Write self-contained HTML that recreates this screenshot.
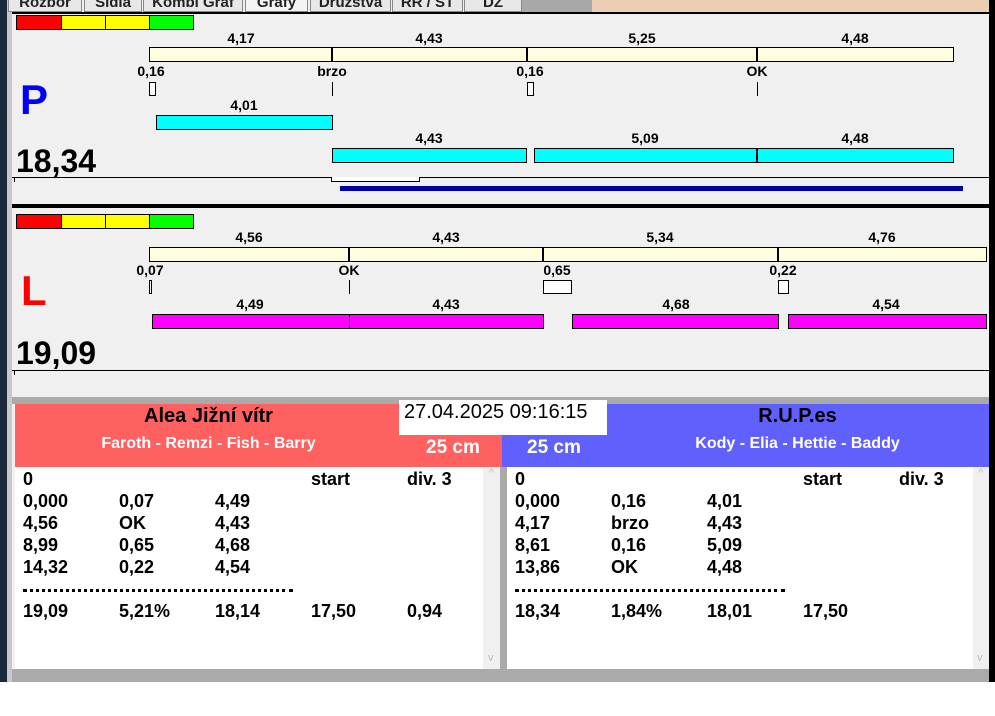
<!DOCTYPE html>
<html><head><meta charset="utf-8"><style>
*{margin:0;padding:0;box-sizing:border-box}
body{width:995px;height:716px;background:#fff;position:relative;overflow:hidden;font-family:"Liberation Sans",Arial,sans-serif}
div{position:absolute}
.l{font-size:14px;font-weight:bold;transform:translateX(-50%);white-space:nowrap;line-height:14px}
.y{background:#ffffe0;border:1px solid #000;height:15px}
.c{background:#00ffff;border:1px solid #000;height:15px}
.m{background:#ff00ff;border:1px solid #000;height:15px}
.v{border-left:2px solid #000}
.bx{background:#fff;border:1px solid #000;height:14px}
.tk{border-left:1px solid #000;height:14px}
.t{font-size:18px;font-weight:bold;line-height:22px;white-space:nowrap}
.tab{top:0;height:12px;background:#e8e8e8;border:1px solid #888;border-top:none;font-size:15px;overflow:hidden;line-height:5px;text-align:center;font-weight:bold;color:#222}
</style></head><body>
<div style="left:0;top:0;width:995px;height:682px;background:#f0f0f0"></div>
<div style="left:0;top:0;width:7px;height:682px;background:#1a2a3a"></div>
<div style="left:7px;top:0;width:5px;height:682px;background:#c8c8c8"></div>
<div style="left:989px;top:0;width:6px;height:682px;background:#000"></div>
<div style="left:522px;top:0;width:70px;height:12px;background:#a8a8a8"></div>
<div style="left:592px;top:0;width:397px;height:12px;background:#ebcfb4"></div>
<div class="tab" style="left:8px;width:74px">Rozbor</div>
<div class="tab" style="left:84px;width:58px">Sidla</div>
<div class="tab" style="left:143px;width:100px">Kombi Graf</div>
<div class="tab" style="left:245px;width:63px;background:#f4f4f4">Grafy</div>
<div class="tab" style="left:310px;width:81px">Družstva</div>
<div class="tab" style="left:392px;width:71px">RR / ST</div>
<div class="tab" style="left:464px;width:58px">DZ</div>
<div style="left:12px;top:12px;width:977px;height:2px;background:#000"></div>

<!-- P panel -->
<div style="left:16px;top:15px;width:46px;height:15px;background:#f00;border:1px solid #000"></div>
<div style="left:61px;top:15px;width:45px;height:15px;background:#ff0;border:1px solid #000"></div>
<div style="left:105px;top:15px;width:45px;height:15px;background:#ff0;border:1px solid #000"></div>
<div style="left:149px;top:15px;width:45px;height:15px;background:#0f0;border:1px solid #000"></div>
<div class="l" style="left:241px;top:31px">4,17</div><div class="l" style="left:429px;top:31px">4,43</div><div class="l" style="left:642px;top:31px">5,25</div><div class="l" style="left:855px;top:31px">4,48</div>
<div class="y" style="left:149px;top:47px;width:805px"></div>
<div class="v" style="left:331px;top:47px;height:15px"></div><div class="v" style="left:526px;top:47px;height:15px"></div><div class="v" style="left:756px;top:47px;height:15px"></div>
<div class="l" style="left:151px;top:64px">0,16</div><div class="l" style="left:332px;top:64px">brzo</div><div class="l" style="left:530px;top:64px">0,16</div><div class="l" style="left:757px;top:64px">OK</div>
<div class="bx" style="left:149px;top:82px;width:7px"></div><div class="tk" style="left:332px;top:82px"></div><div class="bx" style="left:527px;top:82px;width:7px"></div><div class="tk" style="left:757px;top:82px"></div>
<div style="left:20px;top:76px;font-size:42px;font-weight:bold;color:#0000ff;line-height:48px">P</div>
<div class="l" style="left:244px;top:98px">4,01</div>
<div class="c" style="left:156px;top:115px;width:177px"></div>
<div class="l" style="left:429px;top:131px">4,43</div><div class="l" style="left:645px;top:131px">5,09</div><div class="l" style="left:855px;top:131px">4,48</div>
<div class="c" style="left:332px;top:148px;width:195px"></div>
<div class="c" style="left:534px;top:148px;width:420px"></div>
<div class="v" style="left:756px;top:148px;height:15px"></div>
<div style="left:16px;top:143px;font-size:32px;font-weight:bold;line-height:36px">18,34</div>
<div style="left:12px;top:177px;width:977px;height:1px;background:#000"></div>
<div style="left:14px;top:177px;width:1px;height:5px;background:#000"></div>
<div style="left:331px;top:177px;width:89px;height:5px;background:#fff;border:1px solid #000;border-top:none"></div>
<div style="left:340px;top:186px;width:623px;height:5px;background:#0000a8"></div>
<div style="left:12px;top:204px;width:977px;height:4px;background:#000"></div>

<!-- L panel -->
<div style="left:16px;top:214px;width:46px;height:15px;background:#f00;border:1px solid #000"></div>
<div style="left:61px;top:214px;width:45px;height:15px;background:#ff0;border:1px solid #000"></div>
<div style="left:105px;top:214px;width:45px;height:15px;background:#ff0;border:1px solid #000"></div>
<div style="left:149px;top:214px;width:45px;height:15px;background:#0f0;border:1px solid #000"></div>
<div class="l" style="left:249px;top:230px">4,56</div><div class="l" style="left:446px;top:230px">4,43</div><div class="l" style="left:660px;top:230px">5,34</div><div class="l" style="left:882px;top:230px">4,76</div>
<div class="y" style="left:149px;top:247px;width:838px"></div>
<div class="v" style="left:348px;top:247px;height:15px"></div><div class="v" style="left:542px;top:247px;height:15px"></div><div class="v" style="left:777px;top:247px;height:15px"></div>
<div class="l" style="left:150px;top:263px">0,07</div><div class="l" style="left:349px;top:263px">OK</div><div class="l" style="left:557px;top:263px">0,65</div><div class="l" style="left:783px;top:263px">0,22</div>
<div class="bx" style="left:149px;top:280px;width:3px"></div><div class="tk" style="left:349px;top:280px"></div><div class="bx" style="left:543px;top:280px;width:29px"></div><div class="bx" style="left:778px;top:280px;width:11px"></div>
<div style="left:21px;top:268px;font-size:42px;font-weight:bold;color:#f00;line-height:46px">L</div>
<div class="l" style="left:250px;top:297px">4,49</div><div class="l" style="left:446px;top:297px">4,43</div><div class="l" style="left:676px;top:297px">4,68</div><div class="l" style="left:886px;top:297px">4,54</div>
<div class="m" style="left:152px;top:314px;width:198px"></div>
<div class="m" style="left:349px;top:314px;width:195px"></div>
<div class="m" style="left:572px;top:314px;width:207px"></div>
<div class="m" style="left:788px;top:314px;width:199px"></div>
<div style="left:16px;top:335px;font-size:32px;font-weight:bold;line-height:36px">19,09</div>
<div style="left:12px;top:370px;width:977px;height:1px;background:#000"></div>
<div style="left:14px;top:370px;width:1px;height:5px;background:#000"></div>
<div style="left:12px;top:397px;width:977px;height:7px;background:#aaa"></div>

<!-- headers -->
<div style="left:15px;top:404px;width:487px;height:63px;background:#ff6060"></div>
<div style="left:502px;top:404px;width:487px;height:63px;background:#6060ff"></div>
<div style="left:15px;top:404px;width:387px;text-align:center;font-size:20px;font-weight:bold;line-height:24px">Alea Jižní vítr</div>
<div style="left:15px;top:435px;width:387px;text-align:center;font-size:16px;font-weight:bold;color:#fff;line-height:18px">Faroth - Remzi - Fish - Barry</div>
<div style="left:426px;top:437px;font-size:19px;font-weight:bold;color:#fff;line-height:22px">25 cm</div>
<div style="left:527px;top:437px;font-size:19px;font-weight:bold;color:#fff;line-height:22px">25 cm</div>
<div style="left:606px;top:404px;width:383px;text-align:center;font-size:20px;font-weight:bold;line-height:24px">R.U.P.es</div>
<div style="left:606px;top:435px;width:383px;text-align:center;font-size:16px;font-weight:bold;color:#fff;line-height:18px">Kody - Elia - Hettie - Baddy</div>
<div style="left:399px;top:400px;width:208px;height:35px;background:#fff;font-size:20px;line-height:24px;padding-left:5px">27.04.2025 09:16:15</div>

<!-- lists -->
<div style="left:15px;top:467px;width:485px;height:202px;background:#fff"></div>
<div style="left:483px;top:467px;width:17px;height:202px;background:#f0f0f0;color:#bbb;font-size:11px;text-align:center">^<div style="top:185px;left:5px">v</div></div>
<div style="left:500px;top:467px;width:7px;height:202px;background:#aaa"></div>
<div style="left:507px;top:467px;width:482px;height:202px;background:#fff"></div>
<div style="left:973px;top:467px;width:16px;height:202px;background:#f0f0f0;color:#bbb;font-size:11px;text-align:center">^<div style="top:185px;left:4px">v</div></div>
<div style="left:12px;top:669px;width:977px;height:13px;background:#aaa"></div>

<div class="t" style="left:23px;top:468px">0</div><div class="t" style="left:311px;top:468px">start</div><div class="t" style="left:407px;top:468px">div. 3</div>
<div class="t" style="left:23px;top:490px">0,000</div><div class="t" style="left:119px;top:490px">0,07</div><div class="t" style="left:215px;top:490px">4,49</div>
<div class="t" style="left:23px;top:512px">4,56</div><div class="t" style="left:119px;top:512px">OK</div><div class="t" style="left:215px;top:512px">4,43</div>
<div class="t" style="left:23px;top:534px">8,99</div><div class="t" style="left:119px;top:534px">0,65</div><div class="t" style="left:215px;top:534px">4,68</div>
<div class="t" style="left:23px;top:556px">14,32</div><div class="t" style="left:119px;top:556px">0,22</div><div class="t" style="left:215px;top:556px">4,54</div>
<div style="left:23px;top:589px;width:270px;height:3px;border-top:3px dotted #000"></div>
<div class="t" style="left:23px;top:600px">19,09</div><div class="t" style="left:119px;top:600px">5,21%</div><div class="t" style="left:215px;top:600px">18,14</div><div class="t" style="left:311px;top:600px">17,50</div><div class="t" style="left:407px;top:600px">0,94</div>

<div class="t" style="left:515px;top:468px">0</div><div class="t" style="left:803px;top:468px">start</div><div class="t" style="left:899px;top:468px">div. 3</div>
<div class="t" style="left:515px;top:490px">0,000</div><div class="t" style="left:611px;top:490px">0,16</div><div class="t" style="left:707px;top:490px">4,01</div>
<div class="t" style="left:515px;top:512px">4,17</div><div class="t" style="left:611px;top:512px">brzo</div><div class="t" style="left:707px;top:512px">4,43</div>
<div class="t" style="left:515px;top:534px">8,61</div><div class="t" style="left:611px;top:534px">0,16</div><div class="t" style="left:707px;top:534px">5,09</div>
<div class="t" style="left:515px;top:556px">13,86</div><div class="t" style="left:611px;top:556px">OK</div><div class="t" style="left:707px;top:556px">4,48</div>
<div style="left:515px;top:589px;width:270px;height:3px;border-top:3px dotted #000"></div>
<div class="t" style="left:515px;top:600px">18,34</div><div class="t" style="left:611px;top:600px">1,84%</div><div class="t" style="left:707px;top:600px">18,01</div><div class="t" style="left:803px;top:600px">17,50</div>
</body></html>
